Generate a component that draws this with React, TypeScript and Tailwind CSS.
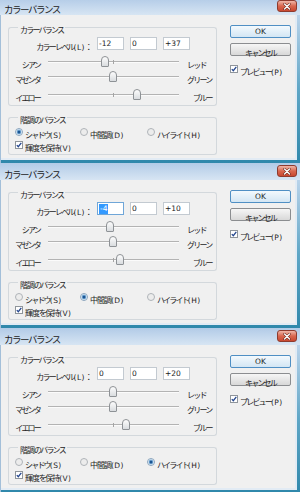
import React from "react";

function T({ s, title }: { s: string; title?: boolean }) {
  const parts = s.match(/[\x20-\x7e]+|[\u4e00-\u9fff]+|[^\x20-\x7e\u4e00-\u9fff]+/g) ?? [];
  return (
    <span className="whitespace-nowrap leading-none text-[#1c1c1c]">
      {parts.map((p, i) =>
        /^[\x20-\x7e]/.test(p) ? (
          <span key={i} className="font-['DejaVu_Sans',sans-serif] text-[7.5px] tracking-[0.4px]">
            {p}
          </span>
        ) : title ? (
          <span key={i} className="font-['Noto_Sans_CJK_JP',sans-serif] text-[9.5px] tracking-[-1.5px]">
            {p}
          </span>
        ) : /^[\u4e00-\u9fff]/.test(p) ? (
          <span key={i} className="font-['Noto_Sans_CJK_JP',sans-serif] text-[8px] tracking-[-1px]">
            {p}
          </span>
        ) : (
          <span key={i} className="font-['Noto_Sans_CJK_JP',sans-serif] text-[8px] tracking-[-1.8px]">
            {p}
          </span>
        )
      )}
    </span>
  );
}

function Group({ label, children }: { label: string; children: React.ReactNode }) {
  return (
    <div className="flex w-[209px] flex-col">
      <div className="flex h-[10px] items-center">
        <div className="h-[5px] w-[10px] self-end rounded-tl-[3px] border-l border-t border-[#d3d8dc]" />
        <div className="flex items-center px-[2px]">
          <T s={label} />
        </div>
        <div className="h-[5px] flex-1 self-end rounded-tr-[3px] border-r border-t border-[#d3d8dc]" />
      </div>
      <div className="rounded-b-[3px] border-x border-b border-[#d3d8dc]">{children}</div>
    </div>
  );
}

function Field({ v, sel }: { v: string; sel?: boolean }) {
  return (
    <div
      className={
        sel
          ? "flex h-[13px] w-[27px] items-center border border-[#6fa6d8] bg-white pl-[1px]"
          : "flex h-[13px] w-[27px] items-center border border-[#c3cad1] bg-white pl-[1px]"
      }
    >
      {sel ? (
        <span className="flex h-[10px] items-center bg-[#3399ff] px-[1px] font-['DejaVu_Sans',sans-serif] text-[7.5px] leading-none text-white">
          {v}
        </span>
      ) : (
        <span className="font-['DejaVu_Sans',sans-serif] text-[7.5px] leading-none text-[#1c1c1c]">{v}</span>
      )}
    </div>
  );
}

function Slider({ v }: { v: number }) {
  const left = 65 + v * 0.65 - 4;
  return (
    <div className="relative ml-[8px] flex h-full w-[131px] items-center">
      <div className="h-[2px] w-full border-t border-[#b3b3b3] bg-[#fbfbfb]" />
      <div className="absolute left-[65px] top-[5px] h-[4px] w-[1px] bg-[#a4a4a4]" />
      <div
        className="absolute top-[1px] h-[11px] w-[8px] rounded-b-[1px] rounded-t-[4px] border border-[#8e9296] bg-gradient-to-b from-[#fdfdfd] to-[#d9dcdf]"
        style={{ left: `${left}px` }}
      />
    </div>
  );
}

function SliderRow({ l, r, v, wide, className }: { l: string; r: string; v: number; wide?: boolean; className: string }) {
  return (
    <div className={className}>
      <div className="flex w-[31px] justify-end">
        <T s={l} />
      </div>
      <Slider v={v} />
      <div className={wide ? "ml-[14px]" : "ml-[8px]"}>
        <T s={r} />
      </div>
    </div>
  );
}

function Radio({ on }: { on?: boolean }) {
  return (
    <svg width="8" height="8" viewBox="0 0 8 8" className="shrink-0">
      <circle cx="4" cy="4" r="3.5" fill={on ? "#eef5fb" : "#ececec"} stroke={on ? "#8aa3bb" : "#aeb3b8"} strokeWidth="1" />
      {on && <circle cx="4" cy="4" r="2.4" fill="#7fb2dc" />}
      {on && <circle cx="4" cy="4" r="1.5" fill="#1b5592" />}
    </svg>
  );
}

function Check() {
  return (
    <svg width="8" height="8" viewBox="0 0 8 8" className="shrink-0">
      <rect x="0.5" y="0.5" width="7" height="7" fill="#ffffff" stroke="#8f959b" />
      <path d="M1.8 4.1 L3.3 5.7 L6.3 1.9" stroke="#24468e" strokeWidth="1.3" fill="none" />
    </svg>
  );
}

function Dialog({
  vals,
  s,
  mode,
  sel,
  crop,
}: {
  vals: string[];
  s: number[];
  mode: number;
  sel?: boolean;
  crop?: boolean;
}) {
  return (
    <div className={crop ? "-mt-[2px] flex h-[165px] w-[300px] flex-col" : "flex h-[165px] w-[300px] flex-col"}>
      <div className="flex h-[17px] items-center bg-gradient-to-b from-[#b2cbe7] to-[#d7e5f3] pl-[4px] pr-[3px]">
        <T s="カラーバランス" title />
        <div className="ml-auto mt-[2px] flex h-[12px] w-[20px] items-center justify-center self-start rounded-[3px] border border-[#8e3b2e] bg-gradient-to-b from-[#efb6a8] via-[#d8674f] to-[#c9472f]">
          <svg width="8" height="7" viewBox="0 0 8 7">
            <path d="M1.5 1 L6.5 6 M6.5 1 L1.5 6" stroke="#5a1e16" strokeWidth="2.4" strokeLinecap="round" />
            <path d="M1.5 1 L6.5 6 M6.5 1 L1.5 6" stroke="#ffffff" strokeWidth="1.4" strokeLinecap="round" />
          </svg>
        </div>
      </div>
      <div className="flex h-[148px] w-[300px]">
        <div className="w-[1px] bg-[#a3bfd9]" />
        <div className="flex flex-1 bg-gradient-to-b from-[#b9d3ea] via-[#5ea6c6] to-[#2f88ab] pb-[3px] pr-[3px]">
          <div className="flex flex-1 bg-[#e2ebf4] pb-[2px] pr-[2px]">
            <div className="flex h-[143px] flex-1 bg-[#f0f0f0]">
              <div className="flex flex-col pl-[7px] pt-[7px]">
                <Group label="カラーバランス">
                  <div className="flex flex-col pb-[3px] pt-[5px]">
                    <div className="flex h-[13px] items-center">
                      <div className="flex w-[82px] justify-end">
                        <T s="カラーレベル(L)：" />
                      </div>
                      <div className="ml-[6px] flex gap-[6px]">
                        <Field v={vals[0]} sel={sel} />
                        <Field v={vals[1]} />
                        <Field v={vals[2]} />
                      </div>
                    </div>
                    <SliderRow className="mt-[5px] flex h-[14px] items-center" l="シアン" r="レッド" v={s[0]} />
                    <SliderRow className="mt-[1px] flex h-[14px] items-center" l="マゼンタ" r="グリーン" v={s[1]} />
                    <SliderRow className="mt-[4px] flex h-[14px] items-center" l="イエロー" r="ブルー" v={s[2]} wide />
                  </div>
                </Group>
                <div className="mt-[6px]">
                  <Group label="階調のバランス">
                    <div className="flex flex-col pb-[3px] pl-[6px] pt-[4px]">
                      <div className="flex h-[12px] items-center">
                        <div className="flex w-[65px] items-center gap-[2px]">
                          <Radio on={mode === 0} />
                          <T s="シャドウ(S)" />
                        </div>
                        <div className="flex w-[67px] items-center gap-[2px]">
                          <Radio on={mode === 1} />
                          <T s="中間調(D)" />
                        </div>
                        <div className="flex items-center gap-[2px]">
                          <Radio on={mode === 2} />
                          <T s="ハイライト(H)" />
                        </div>
                      </div>
                      <div className="mt-[1px] flex h-[12px] items-center gap-[2px]">
                        <Check />
                        <T s="輝度を保持(V)" />
                      </div>
                    </div>
                  </Group>
                </div>
              </div>
              <div className="ml-[13px] flex w-[61px] flex-col pt-[10px]">
                <div className="flex h-[13px] items-center justify-center rounded-[2px] border border-[#4f8fc4] bg-gradient-to-b from-[#f3f9fd] to-[#d3e6f4]">
                  <span className="font-['DejaVu_Sans',sans-serif] text-[7.5px] leading-none text-[#1c1c1c]">OK</span>
                </div>
                <div className="mt-[5px] flex h-[13px] items-center justify-center rounded-[2px] border border-[#8b8d90] bg-gradient-to-b from-[#f6f6f6] to-[#d8d8d8]">
                  <T s="キャンセル" />
                </div>
                <div className="mt-[7px] flex h-[12px] items-center gap-[2px]">
                  <Check />
                  <T s="プレビュー(P)" />
                </div>
              </div>
            </div>
          </div>
        </div>
      </div>
    </div>
  );
}

export default function App() {
  return (
    <div className="h-[492px] w-[300px] overflow-hidden bg-[#2f88ab]">
      <Dialog vals={["-12", "0", "+37"]} s={[-12, 0, 37]} mode={0} crop />
      <Dialog vals={["-4", "0", "+10"]} s={[-4, 0, 10]} mode={1} sel />
      <Dialog vals={["0", "0", "+20"]} s={[0, 0, 20]} mode={2} />
    </div>
  );
}
